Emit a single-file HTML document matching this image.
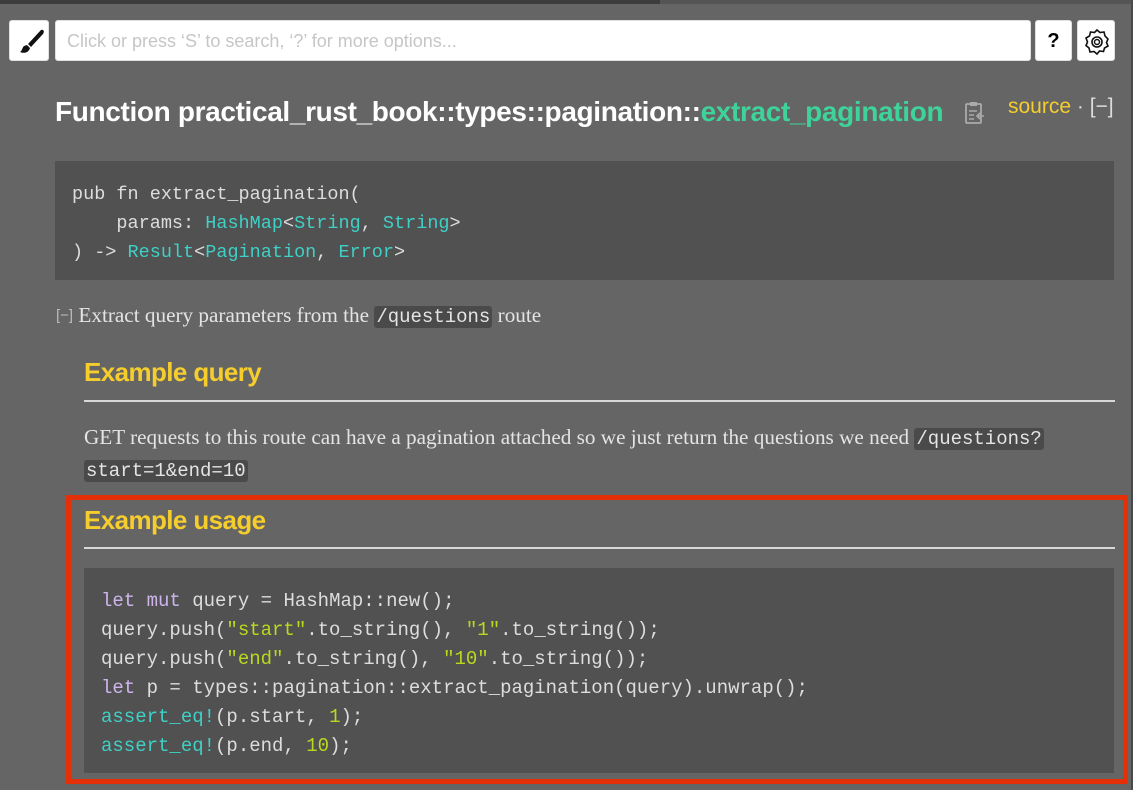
<!DOCTYPE html>
<html><head><meta charset="utf-8"><style>
*{margin:0;padding:0;box-sizing:border-box}
body{width:1133px;height:790px;background:#656565;position:relative;overflow:hidden;font-family:"Liberation Sans",sans-serif;color:#ddd}
.a{position:absolute}
.mono{font-family:"Liberation Mono",monospace}
.btn{background:#fff;border-radius:3px;border:1px solid #e0e0e0}
.code{background:#515151;color:#ddd;white-space:pre}
.t{color:#3fd0c6}
.k{color:#cdb5ec}
.s{color:#bcd81e}
.srf{font-family:"Liberation Serif",serif;color:#e4e4e4;font-size:21.2px}
.ic{background:#4a4a4a;border-radius:3px;padding:0 2px;font-family:"Liberation Mono",monospace;font-size:19px}
h2{position:absolute;color:#f5cd2d;font-size:26px;font-weight:bold;letter-spacing:-0.6px}
.hr{position:absolute;height:2px;background:#d8d8d8}
</style></head><body>
<div class="a" style="left:0;top:0;width:1133px;height:4px;background:#3c3c3c"></div>
<div class="a" style="left:660px;top:0;width:473px;height:4px;background:#555"></div>
<div class="a" style="left:1131px;top:0;width:2px;height:790px;background:#4a4a4a"></div>
<div class="a btn" style="left:9px;top:20px;width:40px;height:41px">
<svg width="40" height="41" viewBox="0 0 40 41"><path d="M31 9 C33 8 35 10 33 13 L21 26 L18 23 Z" fill="#111"/><path d="M17 24 L20 27 C19 31 15 33 10 31 C12 30 12 27 14 25 Z" fill="#111"/></svg></div>
<div class="a btn" style="left:55px;top:20px;width:976px;height:41px"><span class="a" style="left:11px;top:10px;font-size:18px;color:#c6c6c6">Click or press ‘S’ to search, ‘?’ for more options...</span></div>
<div class="a btn" style="left:1035px;top:20px;width:37px;height:41px;text-align:center;font-size:20px;line-height:41px;color:#000;font-weight:bold">?</div>
<div class="a btn" style="left:1077px;top:20px;width:38px;height:41px">
<svg width="38" height="41" viewBox="0 0 38 41"><path d="M19 9 L22 11.5 L26 11 L27 15 L30 18 L28.5 21.5 L30 25 L26.5 27 L25.5 30.5 L21.5 30 L19 33 L16 30.5 L12 31 L11 27 L8 24.5 L9.5 21 L8 17 L11.5 15 L12.5 11 L16.5 11.5 Z" fill="none" stroke="#111" stroke-width="1.6"/><circle cx="19" cy="21" r="5" fill="none" stroke="#111" stroke-width="1.6"/><circle cx="19" cy="21" r="2.5" fill="none" stroke="#111" stroke-width="1.4"/></svg></div>
<div class="a" style="left:55px;top:96px;font-size:28px;font-weight:bold;color:#fff;letter-spacing:-0.35px;white-space:nowrap">Function practical_rust_book::types::pagination::<span style="color:#3ed39a">extract_pagination</span></div>
<svg class="a" style="left:964px;top:101px" width="22" height="24" viewBox="0 0 22 24"><rect x="2" y="3" width="15" height="19" rx="1" fill="none" stroke="#aaa" stroke-width="1.8"/><rect x="6" y="1" width="7" height="4" fill="#aaa"/><path d="M5 10h8M5 14h5M5 18h5M20 15h-7M16 12l-3 3 3 3" stroke="#aaa" stroke-width="1.6" fill="none"/></svg>
<div class="a" style="left:1008px;top:95px;font-size:21px;color:#f5cd2d;white-space:nowrap">source <span style="color:#ddd">· [−]</span></div>
<div class="a code mono" style="left:55px;top:161px;width:1059px;height:119px;padding:19px 0 0 17px;font-size:18.5px;line-height:29px">pub fn extract_pagination(
    params: <span class="t">HashMap</span>&lt;<span class="t">String</span>, <span class="t">String</span>&gt;
) -&gt; <span class="t">Result</span>&lt;<span class="t">Pagination</span>, <span class="t">Error</span>&gt;</div>
<div class="a srf" style="left:56px;top:303px;white-space:nowrap"><span style="font-family:'Liberation Sans';font-size:15px;color:#bbb;vertical-align:2px">[−]</span> Extract query parameters from the <span class="ic">/questions</span> route</div>
<h2 style="left:84px;top:357px">Example query</h2>
<div class="hr" style="left:84px;top:400px;width:1031px"></div>
<div class="a srf" style="left:84px;top:422px;width:1010px;line-height:30px">GET requests to this route can have a pagination attached so we just return the questions we need <span class="ic">/questions?</span><br><span class="ic">start=1&amp;end=10</span></div>
<div class="a" style="left:66px;top:495px;width:1062px;height:289px;border:5px solid #e52f07"></div>
<h2 style="left:84px;top:505px">Example usage</h2>
<div class="hr" style="left:84px;top:547px;width:1031px"></div>
<div class="a code mono" style="left:84px;top:568px;width:1030px;height:205px;padding:19px 0 0 17px;font-size:19px;line-height:29px"><span class="k">let</span> <span class="k">mut</span> query = HashMap::new();
query.push(<span class="s">"start"</span>.to_string(), <span class="s">"1"</span>.to_string());
query.push(<span class="s">"end"</span>.to_string(), <span class="s">"10"</span>.to_string());
<span class="k">let</span> p = types::pagination::extract_pagination(query).unwrap();
<span class="t">assert_eq!</span>(p.start, <span class="s">1</span>);
<span class="t">assert_eq!</span>(p.end, <span class="s">10</span>);</div>
</body></html>
